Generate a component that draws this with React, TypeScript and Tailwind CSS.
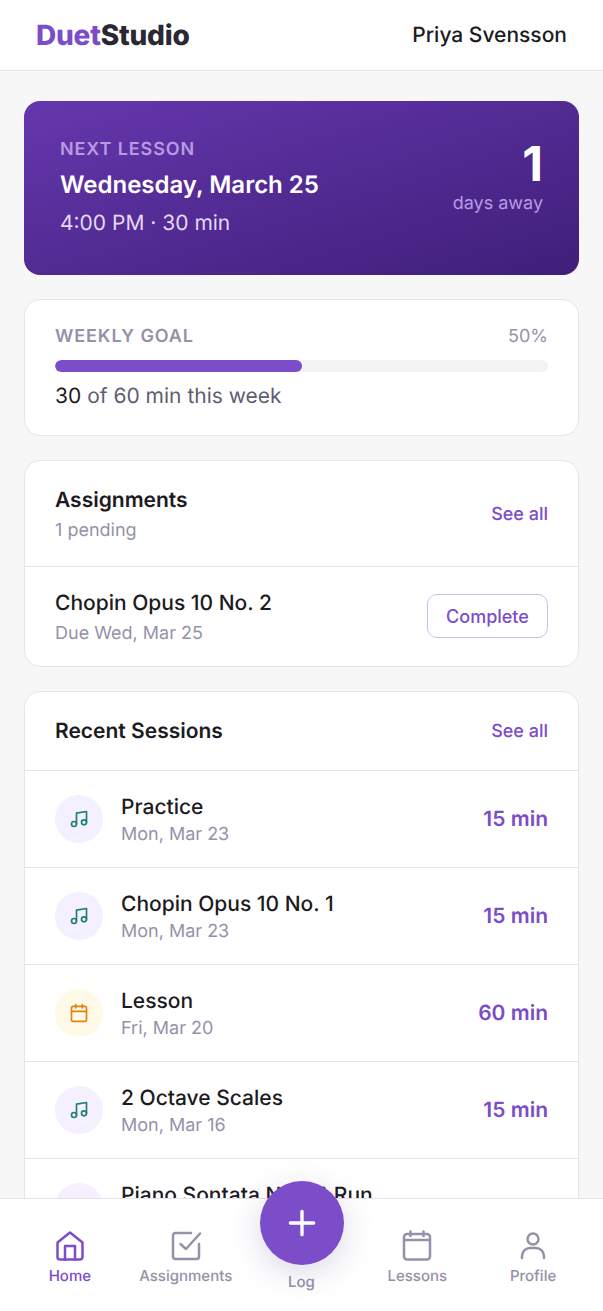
import { Calendar, Music, Plus } from 'lucide-react';

const sessions = [
  { title: 'Practice', date: 'Mon, Mar 23', minutes: 15, kind: 'practice' },
  { title: 'Chopin Opus 10 No. 1', date: 'Mon, Mar 23', minutes: 15, kind: 'practice' },
  { title: 'Lesson', date: 'Fri, Mar 20', minutes: 60, kind: 'lesson' },
  { title: '2 Octave Scales', date: 'Mon, Mar 16', minutes: 15, kind: 'practice' },
  { title: 'Piano Sontata No. 14 Run', date: 'Mon, Mar 16', minutes: 15, kind: 'practice' },
];

function NavSvg({ children }: { children: React.ReactNode }) {
  return (
    <svg width="32" height="32" viewBox="0 0 32 32" fill="none" stroke="currentColor" strokeWidth="2.5" strokeLinecap="round" strokeLinejoin="round">
      {children}
    </svg>
  );
}

const homeIcon = (
  <NavSvg>
    <path d="M3.5 12.5 16 2.5l12.5 10V27a2.5 2.5 0 0 1-2.5 2.5H6A2.5 2.5 0 0 1 3.5 27z" />
    <path d="M11 29.5V16h10v13.5" />
  </NavSvg>
);

const assignmentsIcon = (
  <NavSvg>
    <path d="M21 3H5.5A2.5 2.5 0 0 0 3 5.5v21A2.5 2.5 0 0 0 5.5 29h21a2.5 2.5 0 0 0 2.5-2.5V14" />
    <path d="m10.5 14 5.5 5L30 3.5" />
  </NavSvg>
);

const lessonsIcon = (
  <NavSvg>
    <rect x="3" y="4" width="26" height="25.5" rx="3" />
    <path d="M9.5 1.5V6M22.5 1.5V6M3 10h26" />
  </NavSvg>
);

const profileIcon = (
  <NavSvg>
    <circle cx="16" cy="9" r="5.5" />
    <path d="M5 28v-2a8 8 0 0 1 8-8h6a8 8 0 0 1 8 8v2" />
  </NavSvg>
);

function NavItem({ label, active, icon }: { label: string; active?: boolean; icon: React.ReactNode }) {
  return (
    <div className={`flex flex-1 flex-col items-center gap-1 pt-[31px] ${active ? 'text-[#7c4dc9]' : 'text-[#9492a8]'}`}>
      <div className="flex h-8 w-8 items-center justify-center">{icon}</div>
      <span className="text-[15px] font-medium leading-[20px]">{label}</span>
    </div>
  );
}

export default function App() {
  return (
    <div className="relative flex h-[1311px] w-[603px] flex-col overflow-hidden bg-[#f7f7f8] font-['Inter',sans-serif] [text-rendering:geometricPrecision]">
      <header className="flex h-[71px] shrink-0 items-center justify-between border-b border-[#e5e3ec] bg-white px-9">
        <div className="text-[28px] font-extrabold tracking-[-0.2px] text-[#2a2833]">
          <span className="text-[#7c4dc9]">Duet</span>Studio
        </div>
        <div className="mt-px text-[21px] font-medium leading-[28px] text-[#1c1b22]">Priya Svensson</div>
      </header>

      <main className="flex min-h-0 flex-1 flex-col gap-6 overflow-hidden px-6 pt-[30px]">
        <section className="flex h-[174px] shrink-0 items-start justify-between rounded-2xl bg-gradient-to-br from-[#6637ad] to-[#3f1f7a] px-9 pt-9">
          <div>
            <div className="text-lg font-semibold leading-[26px] tracking-[0.9px] text-[#b89ae4]">NEXT LESSON</div>
            <div className="mt-[6px] text-[24px] font-semibold leading-[32px] text-white">Wednesday, March 25</div>
            <div className="mt-[9px] text-[21px] leading-[28px] text-[#e4d9f5]">4:00 PM · 30 min</div>
          </div>
          <div className="-mt-px flex flex-col items-end">
            <div className="text-[48px] font-bold leading-[56px] text-white">1</div>
            <div className="-mt-px text-lg leading-[26px] text-[#b89ae4]">days away</div>
          </div>
        </section>

        <section className="h-[137px] shrink-0 rounded-2xl border border-[#e5e3ec] bg-white px-[30px] pt-6">
          <div className="flex items-center justify-between">
            <span className="text-lg font-semibold leading-[26px] tracking-[0.9px] text-[#9492a8]">WEEKLY GOAL</span>
            <span className="text-lg leading-[26px] text-[#9492a8]">50%</span>
          </div>
          <div className="mt-[10px] h-3 overflow-hidden rounded-full bg-[#f3f3f5]">
            <div className="h-full w-1/2 rounded-full bg-[#7c4dc9]" />
          </div>
          <div className="mt-[11px] text-[21px] leading-[28px] text-[#5f5d70]">
            <span className="text-[#1c1b22]">30</span> of 60 min this week
          </div>
        </section>

        <section className="shrink-0 overflow-hidden rounded-2xl border border-[#e5e3ec] bg-white">
          <div className="flex h-[106px] items-center justify-between border-b border-[#e5e3ec] px-[30px]">
            <div className="pt-[4px]">
              <div className="text-[21px] font-semibold leading-[28px] text-[#1c1b22]">Assignments</div>
              <div className="mt-[3px] text-lg leading-[26px] text-[#9492a8]">1 pending</div>
            </div>
            <span className="mt-[3px] text-lg font-medium text-[#7c4dc9]">See all</span>
          </div>
          <div className="flex h-[99px] items-center justify-between px-[30px]">
            <div className="pt-[3px]">
              <div className="text-[21px] font-medium leading-[28px] text-[#1c1b22]">Chopin Opus 10 No. 2</div>
              <div className="mt-[3px] text-lg leading-[26px] text-[#9492a8]">Due Wed, Mar 25</div>
            </div>
            <button className="-mt-px h-[44px] w-[121px] rounded-[10px] border border-[#cdbdee] pt-[2px] text-lg font-medium text-[#7c4dc9]">Complete</button>
          </div>
        </section>

        <section className="shrink-0 rounded-2xl border border-[#e5e3ec] bg-white">
          <div className="flex h-[79px] items-center justify-between border-b border-[#e5e3ec] px-[30px]">
            <span className="mt-[2px] text-[21px] font-semibold text-[#1c1b22]">Recent Sessions</span>
            <span className="mt-px text-lg font-medium text-[#7c4dc9]">See all</span>
          </div>
          {sessions.map((s) => (
            <div key={s.title} className="flex h-[97px] items-center gap-[18px] border-b border-[#e5e3ec] px-[30px]">
              <div className={`flex h-12 w-12 shrink-0 items-center justify-center rounded-full ${s.kind === 'lesson' ? 'bg-[#fff9e8]' : 'bg-[#f4f0ff]'}`}>
                {s.kind === 'lesson' ? (
                  <Calendar size={20} className="text-[#e08312]" />
                ) : (
                  <Music size={20} className="text-[#1f7f72]" />
                )}
              </div>
              <div className="min-w-0 flex-1 pt-[3px]">
                <div className="text-[21px] font-medium leading-[28px] text-[#1c1b22]">{s.title}</div>
                <div className="text-lg leading-[26px] text-[#9492a8]">{s.date}</div>
              </div>
              <span className="mt-[2px] text-[21px] font-semibold text-[#7c4dc9]">{s.minutes} min</span>
            </div>
          ))}
        </section>
      </main>

      <nav className="absolute bottom-0 left-0 right-0 flex h-[113px] border-t border-[#e5e3ec] bg-white px-3">
        <NavItem label="Home" active icon={homeIcon} />
        <NavItem label="Assignments" icon={assignmentsIcon} />
        <div className="relative flex flex-1 flex-col items-center">
          <button className="absolute -top-[18px] left-[16px] flex h-[84px] w-[84px] items-center justify-center rounded-full bg-[#7c4dc9] text-white shadow-[0_8px_32px_rgba(60,40,120,0.18)]">
            <Plus size={40} strokeWidth={2} />
          </button>
          <span className="mt-[73px] text-[15px] font-medium leading-[20px] text-[#9492a8]">Log</span>
        </div>
        <NavItem label="Lessons" icon={lessonsIcon} />
        <NavItem label="Profile" icon={profileIcon} />
      </nav>
    </div>
  );
}
